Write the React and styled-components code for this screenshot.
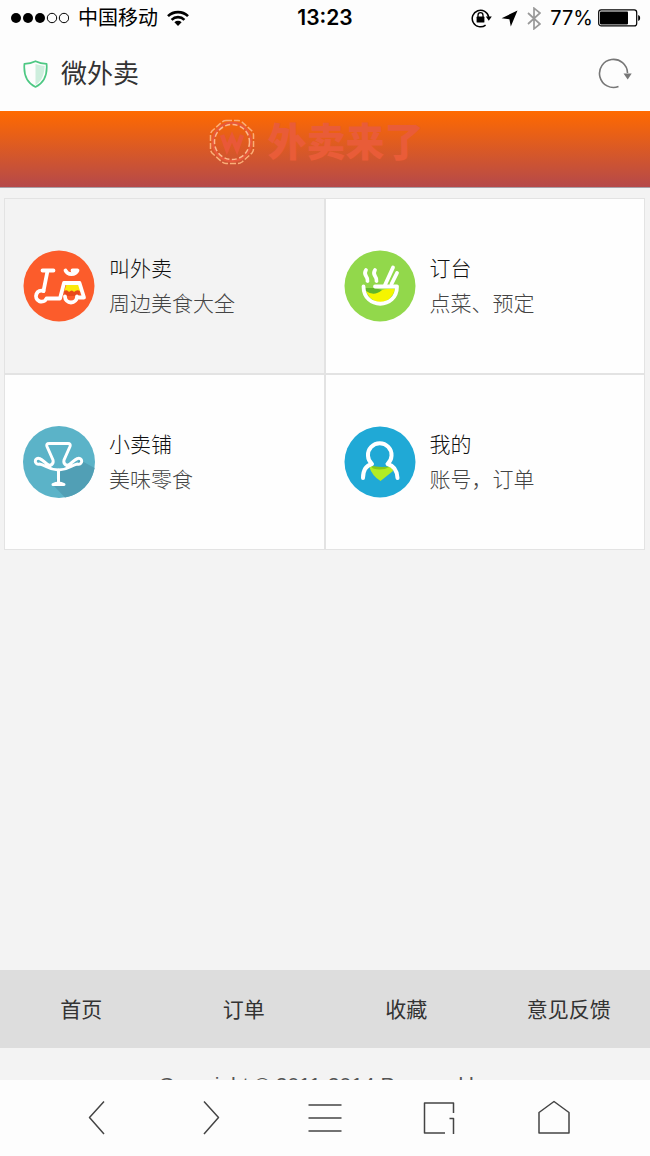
import React from "react";
import styled, { createGlobalStyle } from "styled-components";

const GlobalStyle = createGlobalStyle`
  * { box-sizing: border-box; }
  body {
    margin: 0;
    background: #f3f3f3;
    color: #333;
    font-family: "Inter", "Noto Sans CJK SC", sans-serif;
  }
  button {
    display: flex;
    padding: 0;
    border: 0;
    background: none;
    cursor: pointer;
  }
  a { color: inherit; text-decoration: none; }
  svg { display: block; flex: none; }
`;

const Screen = styled.div`
  display: flex;
  flex-direction: column;
  min-height: 100vh;
`;

const StatusBar = styled.div`
  display: grid;
  grid-template-columns: 1fr auto 1fr;
  align-items: center;
  height: 36px;
  padding: 0 9px;
  background: #fdfdfd;
  color: #000;
  font-size: 20px;
  line-height: 36px;
`;

const StatusGroup = styled.div`
  display: flex;
  align-items: center;
  justify-content: ${(p) => (p.$end ? "flex-end" : "flex-start")};
  gap: ${(p) => p.$gap}px;
`;

const Clock = styled.time`
  font-size: 21px;
  font-weight: 600;
`;

const TitleBar = styled.header`
  display: flex;
  align-items: center;
  gap: 13px;
  height: 75px;
  padding: 0 18px 0 23px;
  background: #fdfdfd;
`;

const Title = styled.h1`
  flex: 1;
  margin: 0;
  font-size: 26px;
  font-weight: 400;
  line-height: 36px;
`;

const Page = styled.main`
  display: flex;
  flex: 1;
  flex-direction: column;
`;

const Banner = styled.div`
  display: flex;
  align-items: flex-start;
  justify-content: center;
  gap: 12px;
  height: 77px;
  padding: 8px 17px 0 0;
  border-bottom: 1px solid #a9a0a8;
  background: linear-gradient(#ff6a00, #b5494a);
`;

const BannerName = styled.span`
  color: #e95c38;
  font-size: 39px;
  font-weight: 900;
  line-height: 46px;
`;

const Tiles = styled.nav`
  display: grid;
  grid-template-columns: 1fr 1fr;
  gap: 2px;
  margin: 10px 5px 0 4px;
  padding: 1px;
  background: #e3e3e3;
`;

const Tile = styled.a`
  display: flex;
  align-items: center;
  gap: 14px;
  height: 174px;
  padding-left: 18px;
  background: ${(p) => (p.$active ? "#f3f3f3" : "#fefefe")};
`;

const TileText = styled.span`
  display: flex;
  flex-direction: column;
  font-size: 21px;
  font-weight: 300;
  line-height: 35px;
`;

const TileName = styled.span`
  color: #111;
`;

const TileNote = styled.span`
  color: #444;
`;

const PageFooter = styled.footer`
  margin-top: auto;
`;

const FooterNav = styled.nav`
  display: grid;
  grid-template-columns: repeat(4, 1fr);
  background: #ddd;
`;

const FooterLink = styled.a`
  padding-top: 2px;
  font-size: 21px;
  line-height: 76px;
  text-align: center;
`;

const Copyright = styled.p`
  height: 32px;
  margin: 0;
  padding-top: 24px;
  overflow: hidden;
  color: #555;
  font-family: "Liberation Sans", sans-serif;
  font-size: 21px;
  line-height: 26px;
  text-align: center;
`;

const Toolbar = styled.div`
  display: flex;
  align-items: center;
  justify-content: space-between;
  height: 76px;
  padding: 0 76px;
  background: #fdfdfd;
`;

const SignalIcon = () => (
  <svg width="60" height="12" viewBox="0 0 60 12">
    {[7, 19, 31].map((x) => (
      <circle key={x} cx={x} cy="6" r="5" />
    ))}
    {[43, 55].map((x) => (
      <circle key={x} cx={x} cy="6" r="4.7" fill="none" stroke="#000" />
    ))}
  </svg>
);

const WifiIcon = () => (
  <svg width="22" height="17" viewBox="0 0 22 17" fill="none" stroke="#000" strokeWidth="2.6">
    <path d="M1 6.2a14.2 14.2 0 0 1 20 0M4.6 9.8a9 9 0 0 1 12.8 0" />
    <path d="M7.4 12.3a5.2 5.2 0 0 1 7.2 0L11 16z" fill="#000" stroke="none" />
  </svg>
);

const LockIcon = () => (
  <svg width="21" height="20" viewBox="0 0 21 20">
    <path d="M14.6 17.1A8.3 8.3 0 1 1 17.7 9" fill="none" stroke="#000" strokeWidth="1.5" />
    <path d="M14.8 8.6h6l-3 4.2z" />
    <rect x="5.6" y="8.6" width="7.8" height="6" rx=".6" />
    <path d="M7 9V7.2a2.5 2.5 0 0 1 5 0V9" fill="none" stroke="#000" strokeWidth="1.3" />
  </svg>
);

const LocationIcon = () => (
  <svg width="17" height="17" viewBox="0 0 17 17">
    <path d="M16.5.5 9.8 16.4 8.4 9.2.6 8.2z" />
  </svg>
);

const BluetoothIcon = () => (
  <svg width="14" height="23" viewBox="0 0 14 23" fill="none" stroke="#999" strokeWidth="1.7">
    <path d="M1 6l12 11-6 4.8V1.2L13 6 1 17" />
  </svg>
);

const BatteryIcon = () => (
  <svg width="43" height="18" viewBox="0 0 43 18">
    <rect x=".7" y=".9" width="38" height="16" rx="2.5" fill="#fff" stroke="#000" strokeWidth="1.2" />
    <rect x="2" y="2.4" width="28" height="13" rx=".8" />
    <path d="M40.2 6q2 .6 2 3t-2 3z" />
  </svg>
);

const ShieldIcon = () => (
  <svg width="25" height="28" viewBox="0 0 25 28">
    <path d="M12.5 4v21c5-3 8.6-8 9.2-19Q17 5.6 12.5 4z" fill="#cdeedd" />
    <path
      d="M12.5 1.2Q17.5 3.6 23.6 3.9C24.6 16 20 23.5 12.5 27 5 23.5.4 16 1.4 3.9Q7.5 3.6 12.5 1.2z"
      fill="none"
      stroke="#4dc883"
      strokeWidth="1.7"
      strokeLinejoin="round"
    />
  </svg>
);

const RefreshIcon = () => (
  <svg width="34" height="32" viewBox="0 0 34 32">
    <path d="M20.5 28.5A14 14 0 1 1 29.5 15" fill="none" stroke="#777" strokeWidth="1.6" />
    <path d="M25.5 15.5h8.2l-4 6z" fill="#777" />
  </svg>
);

const BannerLogo = () => (
  <svg width="46" height="46" viewBox="0 0 46 46" fill="none">
    <path
      d="M17 1.5h12q2 0 4 1.5l10 9q1.5 2 1.5 4v14q0 2-1.5 4l-10 9q-2 1.5-4 1.5H17q-2 0-4-1.5l-10-9Q1.5 32 1.5 30V16q0-2 1.5-4l10-9q2-1.5 4-1.5z"
      stroke="#fbae78"
      strokeWidth="1.5"
      strokeDasharray="6 2"
    />
    <circle cx="23" cy="23" r="19" stroke="#e8583a" strokeWidth="2.5" />
    <circle cx="23" cy="23" r="17.5" stroke="#fbb98c" strokeWidth="1.5" strokeDasharray="5 2.5" />
    <path d="M13 16l5 14 5-12 5 12 5-14" stroke="#e95838" strokeWidth="4.5" />
  </svg>
);

const ScooterIcon = () => (
  <svg width="72" height="72" viewBox="0 0 72 72" fill="none">
    <circle cx="36" cy="36" r="35.5" fill="#fc5c2b" />
    <path d="M43.5 34h14l2 8H41z" fill="#fbe90c" />
    <path d="M41 41q3-2 5 1 3-3 5 0 3-3 6-1l-1 5H42z" fill="#e8481b" />
    <g stroke="#fff" strokeWidth="3.8" strokeLinecap="round" strokeLinejoin="round">
      <path d="M19.5 20.5h11M24.5 21 20.5 41" />
      <path d="M20.5 41a5.5 5.5 0 1 0 3 7.5H37L41 33h15.5l4.5 14.5h-5" />
      <path d="M42 46.5a6 6 0 0 0 12 0" />
      <path d="M42.5 20.5a6.500 6 0 0 0 12 0h-5" />
    </g>
  </svg>
);

const BowlIcon = () => (
  <svg width="72" height="72" viewBox="0 0 72 72" fill="none">
    <circle cx="36" cy="36" r="35.5" fill="#92d84b" />
    <path d="M21 38q7 6 14 3t16-2q-3 12-15 14-12-3-15-15z" fill="#f5f500" />
    <path d="M21 38h9l8 2q-8 7-16 1z" fill="#62b52a" />
    <g stroke="#fff" strokeLinecap="round" strokeLinejoin="round">
      <path d="M19.5 36.5c0 23 33.500 23 33.500 0H31" strokeWidth="3.8" />
      <path d="M41 35l8-17.5M47.5 34l5.500-11" strokeWidth="3.8" />
      <path d="M22 20q-2 3 0 6t1.500 5M31 20q-2 3 0 6t1.500 5" strokeWidth="3.8" />
    </g>
  </svg>
);

const ChairIcon = () => (
  <svg width="72" height="72" viewBox="0 0 72 72" fill="none">
    <circle cx="36" cy="36" r="36" fill="#5bb3c8" />
    <path d="M57 34 71.6 42A36 36 0 0 1 42 71.5L31 60l6-15 14-5z" fill="#519fb5" />
    <g stroke="#fff" strokeWidth="3" strokeLinecap="round" strokeLinejoin="round">
      <path d="M27 39.500Q31 38 30 34L24 20.500q-1-3 2-3h19q3 0 2 3L41 34Q40 38 44 39.500" />
      <path d="M27 39.500C23 39 21 34 16.500 32.500a3 3 0 1 0 0 5.500C23 39 25 44 35.500 44S48 39 54.500 38a3 3 0 1 0 0-5.500C50 34 48 39 44 39.500" />
      <path d="M35.5 44V57M30 58.5q5.500-3 11 0z" />
    </g>
  </svg>
);

const PersonIcon = () => (
  <svg width="72" height="72" viewBox="0 0 72 72" fill="none">
    <circle cx="36" cy="36" r="35.5" fill="#20a9d6" />
    <path d="M25 40q11 3 23 0l1 5-12.500 10Q28 50 25 40z" fill="#b2ed24" />
    <path d="M26 39.5q10 2.500 21 .7-8 5-18 2.300z" fill="#86c91b" />
    <path
      d="M19 52C19 44 22 39.500 28 38a11.800 11.800 0 1 1 15.500 0C49.500 39.500 53 44 53.500 52"
      stroke="#fff"
      strokeWidth="4"
      strokeLinecap="round"
      strokeLinejoin="round"
    />
  </svg>
);

const ToolIcon = ({ d }) => (
  <svg width="40" height="40" viewBox="0 0 40 40" fill="none" stroke="#444" strokeWidth="1.5">
    <path d={d} strokeLinejoin="round" />
  </svg>
);

const tiles = [
  { name: "叫外卖", note: "周边美食大全", Icon: ScooterIcon, active: true },
  { name: "订台", note: "点菜、预定", Icon: BowlIcon },
  { name: "小卖铺", note: "美味零食", Icon: ChairIcon },
  { name: "我的", note: "账号，订单", Icon: PersonIcon },
];

const footerLinks = ["首页", "订单", "收藏", "意见反馈"];

const tools = [
  { label: "后退", d: "M28 3.5 13.5 19.5 28 36" },
  { label: "前进", d: "M13 3.5 27.5 19.5 13 36" },
  { label: "菜单", d: "M3.5 7h33M3.5 20h33M3.5 33h33" },
  { label: "窗口", d: "M25 35H4.5V5H33.5v10M29.5 20.5h4V36" },
  { label: "主页", d: "M5 35V14.5L20 3.5l15 11V35z" },
];

export default function App() {
  return (
    <Screen>
      <GlobalStyle />
      <StatusBar>
        <StatusGroup $gap={9}>
          <SignalIcon />
          <span>中国移动</span>
          <WifiIcon />
        </StatusGroup>
        <Clock>13:23</Clock>
        <StatusGroup $end $gap={9}>
          <LockIcon />
          <LocationIcon />
          <BluetoothIcon />
          <StatusGroup $gap={5}>
            <span>77%</span>
            <BatteryIcon />
          </StatusGroup>
        </StatusGroup>
      </StatusBar>
      <TitleBar>
        <ShieldIcon />
        <Title>微外卖</Title>
        <button type="button" aria-label="刷新">
          <RefreshIcon />
        </button>
      </TitleBar>
      <Page>
        <Banner>
          <BannerLogo />
          <BannerName>外卖来了</BannerName>
        </Banner>
        <Tiles>
          {tiles.map(({ name, note, Icon, active }) => (
            <Tile key={name} href="#" $active={active}>
              <Icon />
              <TileText>
                <TileName>{name}</TileName>
                <TileNote>{note}</TileNote>
              </TileText>
            </Tile>
          ))}
        </Tiles>
        <PageFooter>
          <FooterNav>
            {footerLinks.map((label) => (
              <FooterLink key={label} href="#">
                {label}
              </FooterLink>
            ))}
          </FooterNav>
          <Copyright>Copyright © 2011-2014 Powered by</Copyright>
        </PageFooter>
      </Page>
      <Toolbar>
        {tools.map(({ label, d }) => (
          <button key={label} type="button" aria-label={label}>
            <ToolIcon d={d} />
          </button>
        ))}
      </Toolbar>
    </Screen>
  );
}
